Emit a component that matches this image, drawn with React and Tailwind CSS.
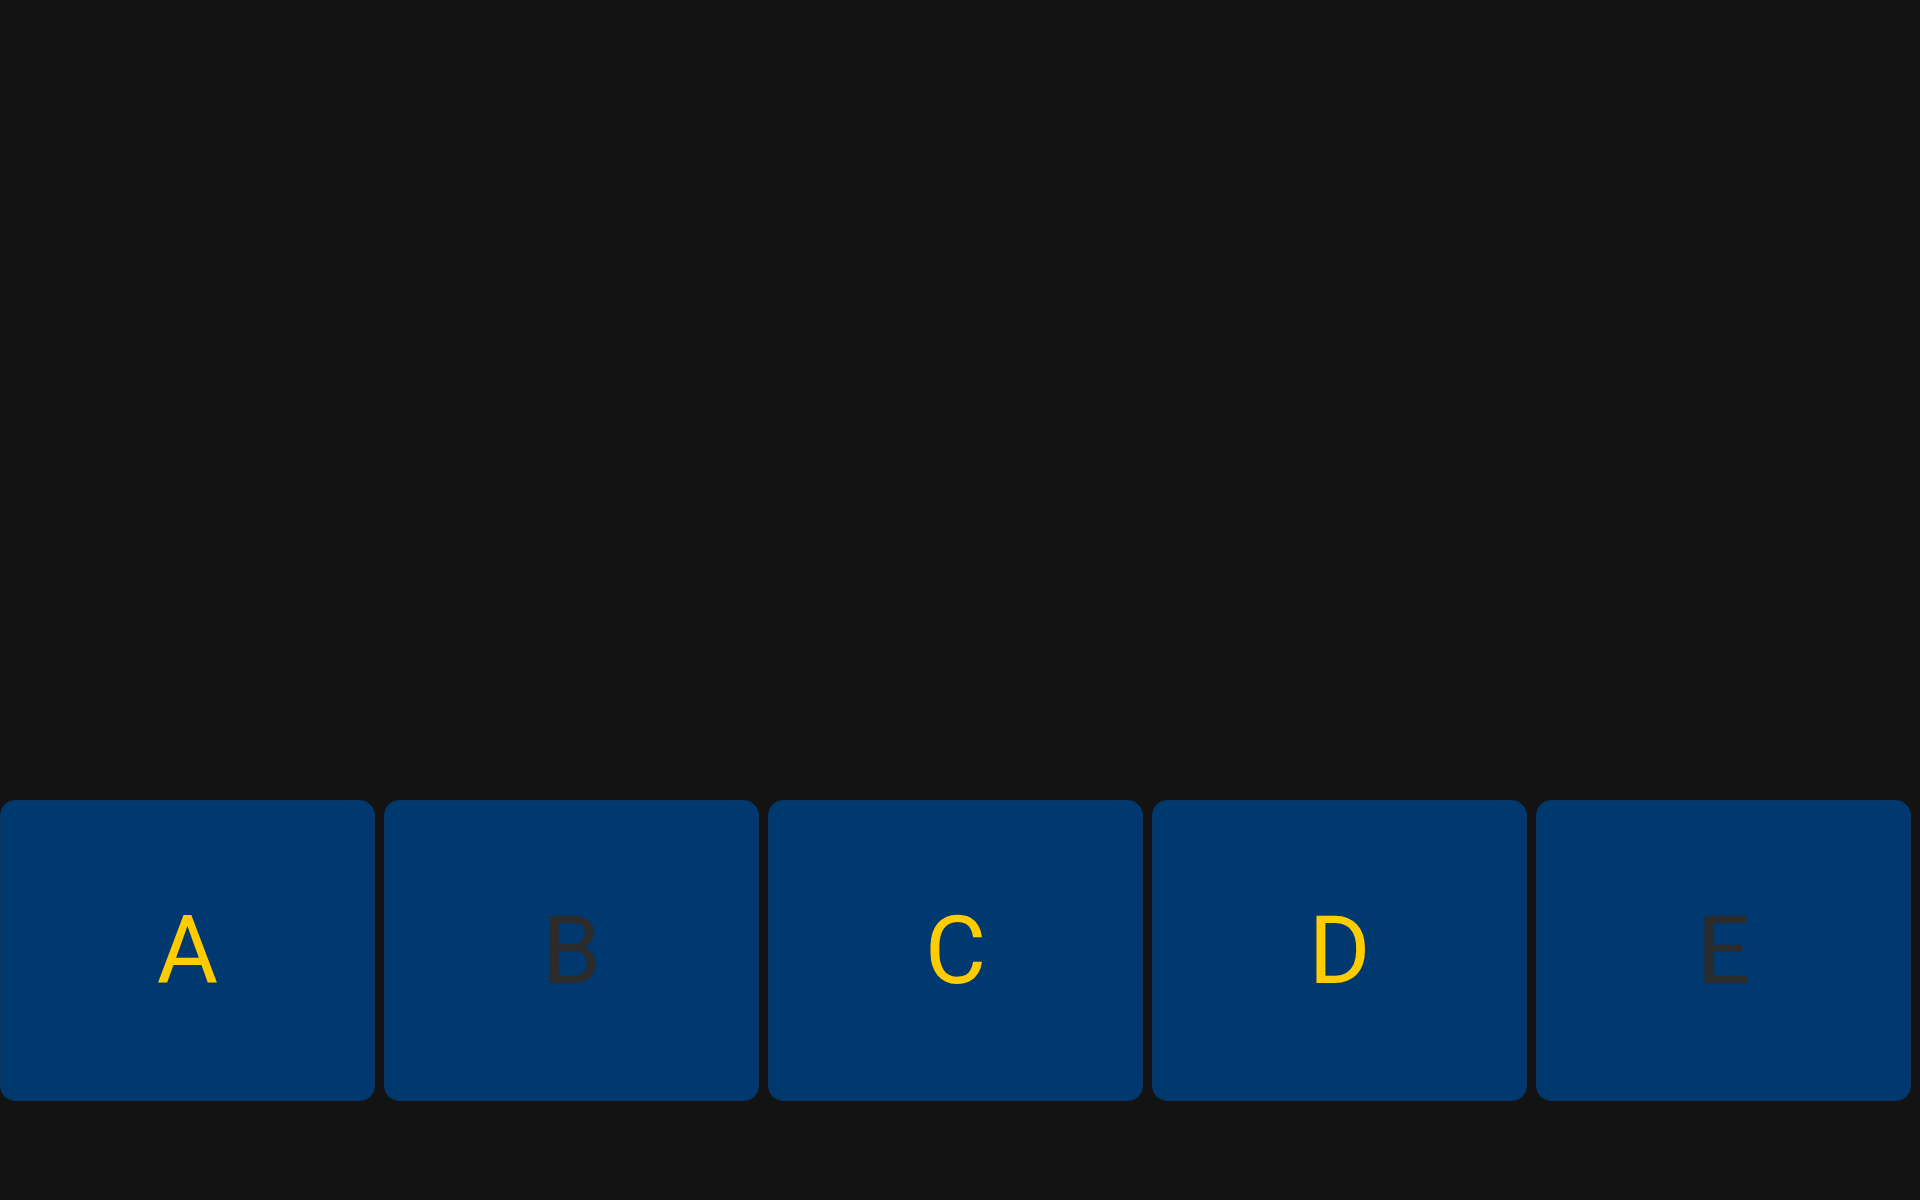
import React from 'react';

const TILES = [
  { label: 'A', color: 'text-[#ffcc00]' },
  { label: 'B', color: 'text-[#2b2b2b]' },
  { label: 'C', color: 'text-[#ffcc00]' },
  { label: 'D', color: 'text-[#ffcc00]' },
  { label: 'E', color: 'text-[#2b2b2b]' },
];

export default function App() {
  return (
    <div
      className="h-[1200px] w-full bg-[#131313] flex flex-col justify-end pb-[99px]"
      style={{ fontFamily: 'Roboto, "Liberation Sans", sans-serif' }}
    >
      <div className="flex gap-[9px]">
        {TILES.map((tile) => (
          <div
            key={tile.label}
            className="w-[375px] h-[301px] shrink-0 rounded-[15px] bg-[#003870] border border-[#0b3560] flex items-center justify-center"
          >
            <span className={`text-[94px] leading-none ${tile.color}`}>{tile.label}</span>
          </div>
        ))}
      </div>
    </div>
  );
}
